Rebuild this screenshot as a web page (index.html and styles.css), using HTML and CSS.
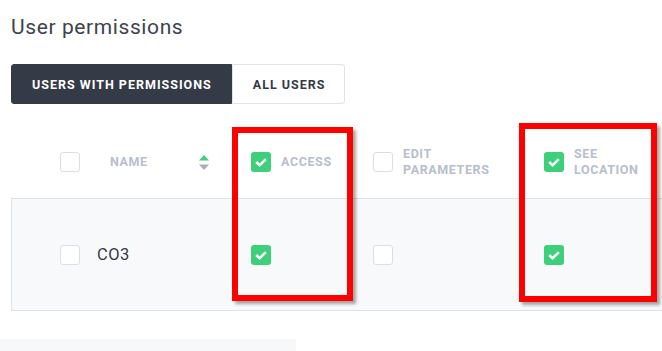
FILE: index.html
```html
<!DOCTYPE html>
<html lang="en">
<head>
  <meta charset="UTF-8">
  <meta name="viewport" content="width=device-width, initial-scale=1.0">
  <title>User permissions</title>
  <link rel="stylesheet" href="styles.css">
</head>
<body>
  <div class="page">
    <h1 class="title">User permissions</h1>

    <div class="tabs">
      <button class="tab active">Users with permissions</button>
      <button class="tab">All users</button>
    </div>

    <div class="table-wrap">
      <div class="row head">
        <div class="cell"><span class="box"></span></div>
        <div class="cell name-head">
          <span class="label">Name</span>
          <svg class="sort" width="10" height="15" viewBox="0 0 10 15">
            <path d="M5 0 L10 5.5 L0 5.5 Z" fill="#3ecf7b"/>
            <path d="M0 9.5 L10 9.5 L5 15 Z" fill="#a9adb4"/>
          </svg>
        </div>
        <div class="cell">
          <span class="box on"><svg width="20" height="20" viewBox="0 0 20 20"><path d="M5.2 10 L8.6 13.3 L14.8 7.1" fill="none" stroke="#fff" stroke-width="2.6"/></svg></span>
          <span class="label">Access</span>
        </div>
        <div class="cell">
          <span class="box"></span>
          <span class="label">Edit<br>parameters</span>
        </div>
        <div class="cell">
          <span class="box on"><svg width="20" height="20" viewBox="0 0 20 20"><path d="M5.2 10 L8.6 13.3 L14.8 7.1" fill="none" stroke="#fff" stroke-width="2.6"/></svg></span>
          <span class="label">See<br>location</span>
        </div>
      </div>

      <div class="row item">
        <div class="cell"><span class="box"></span></div>
        <div class="cell user">CO3</div>
        <div class="cell">
          <span class="box on"><svg width="20" height="20" viewBox="0 0 20 20"><path d="M5.2 10 L8.6 13.3 L14.8 7.1" fill="none" stroke="#fff" stroke-width="2.6"/></svg></span>
        </div>
        <div class="cell"><span class="box"></span></div>
        <div class="cell">
          <span class="box on"><svg width="20" height="20" viewBox="0 0 20 20"><path d="M5.2 10 L8.6 13.3 L14.8 7.1" fill="none" stroke="#fff" stroke-width="2.6"/></svg></span>
        </div>
      </div>

      <!-- annotation frames -->
      <div class="mark mark-access"></div>
      <div class="mark mark-location"></div>
    </div>

    <div class="footer-bar"></div>
  </div>
</body>
</html>
```

FILE: styles.css
```css
html, body {
  margin: 0;
  padding: 0;
  background: #fff;
  overflow: hidden;
}

body {
  font-family: Roboto, "Liberation Sans", sans-serif;
  color: #3b404b;
}

.page {
  padding: 15px 0 0 11px;
}

.title {
  margin: 0;
  font-size: 21px;
  line-height: 24px;
  font-weight: 400;
  letter-spacing: 0.6px;
  color: #3d424d;
}

.tabs {
  display: flex;
  margin-top: 25px;
}

.tab {
  height: 40px;
  padding: 0 19px 0 20px;
  border: 1px solid #dfe4eb;
  background: #fff;
  color: #343a46;
  font-family: inherit;
  font-size: 12.5px;
  font-weight: 700;
  letter-spacing: 1px;
  text-transform: uppercase;
  border-radius: 0 3px 3px 0;
}

.tab.active {
  background: #343a46;
  border-color: #343a46;
  color: #fff;
  border-radius: 3px 0 0 3px;
}

.table-wrap {
  position: relative;
  width: 700px;
  margin-top: 22px;
}

.row {
  display: grid;
  grid-template-columns: 37px 154px 122px 171px 1fr;
  align-items: center;
  padding-left: 48px;
  border: 1px solid transparent;
}

.row.head {
  height: 70px;
}

.row.item {
  height: 111px;
  background: #f8f9fb;
  border-color: #dce2ea;
}

.cell {
  display: flex;
  align-items: center;
  gap: 10px;
}

.box {
  width: 20px;
  height: 20px;
  box-sizing: border-box;
  border: 1px solid #d8dfe9;
  border-radius: 3px;
  background: #fff;
  flex-shrink: 0;
}

.box.on {
  border: none;
  background: #3ecf7b;
}

.box svg {
  display: block;
}

.label {
  font-size: 12.5px;
  line-height: 16px;
  font-weight: 700;
  letter-spacing: 0.6px;
  color: #b7bece;
  text-transform: uppercase;
}

.name-head {
  padding-left: 13px;
  gap: 0;
}

.name-head .label {
  width: 89px;
}

.sort {
  display: block;
}

.user {
  font-size: 16.5px;
  letter-spacing: 0.5px;
  color: #333a45;
}

.mark {
  position: absolute;
  border: 6px solid #ff0000;
  box-shadow: 3px 3px 3px rgba(0, 0, 0, 0.35);
}

.mark-access {
  left: 221px;
  top: 1px;
  width: 109px;
  height: 162px;
}

.mark-location {
  left: 508px;
  top: -3px;
  width: 126px;
  height: 167px;
}

.footer-bar {
  margin: 28px 0 0 -11px;
  width: 296px;
  height: 14px;
  background: #f7f8fa;
}
```
